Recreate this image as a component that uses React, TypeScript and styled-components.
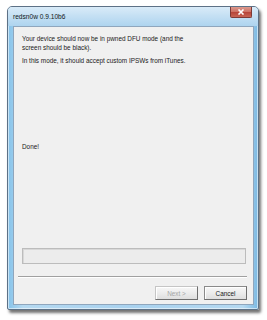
import styled, { createGlobalStyle } from 'styled-components';

const GlobalStyle = createGlobalStyle`
  html, body {
    margin: 0;
    padding: 0;
    background: #ffffff;
  }
  body {
    font-family: "Liberation Sans", Arial, sans-serif;
    -webkit-font-smoothing: antialiased;
  }
`;

const App = () => {
  return (
    <>
      <GlobalStyle />
      <Page>
        <Window>
          <TitleBar>
            <Title>redsn0w 0.9.10b6</Title>
            <CloseButton>
              <svg width="8" height="6" viewBox="0 0 8 6">
                <path d="M1.5 0.5 L6.5 5.5 M6.5 0.5 L1.5 5.5" stroke="#ffffff" strokeWidth="1.6" />
              </svg>
            </CloseButton>
          </TitleBar>
          <Content>
            <Message>
              Your device should now be in pwned DFU mode (and the
              <br />
              screen should be black).
            </Message>
            <Message>In this mode, it should accept custom IPSWs from iTunes.</Message>
            <Status>Done!</Status>
            <Spacer />
            <ProgressBox />
            <Separator />
            <ButtonRow>
              <Button disabled>Next &gt;</Button>
              <Button>Cancel</Button>
            </ButtonRow>
          </Content>
        </Window>
      </Page>
    </>
  );
};

export default App;

const Page = styled.div`
  width: 267px;
  height: 320px;
  padding: 6px 0 0 7px;
  box-sizing: border-box;
`;

const Window = styled.div`
  width: 252px;
  height: 304px;
  box-sizing: border-box;
  display: flex;
  flex-direction: column;
  border: 1px solid #5d7186;
  border-radius: 5px 5px 2px 2px;
  background: linear-gradient(90deg, #86c3ea 0%, #b5d9f1 6%, #a9d2ef 50%, #b5d9f1 94%, #7cb9e2 100%);
  box-shadow: 2px 3px 3px rgba(0, 0, 0, 0.55), inset 0 0 0 1px rgba(255, 255, 255, 0.55);
  padding: 0 4px 4px 5px;
`;

const TitleBar = styled.div`
  height: 19px;
  display: flex;
  align-items: flex-start;
  justify-content: space-between;
  background: linear-gradient(180deg, #d9ebf8 0%, #c3dff3 50%, #aed4ef 100%);
  margin: 0 -4px 0 -5px;
  padding: 0 6px 0 5px;
  border-radius: 4px 4px 0 0;
`;

const Title = styled.div`
  font-size: 6.6px;
  color: #101820;
  margin-top: 6px;
  white-space: nowrap;
`;

const CloseButton = styled.div`
  width: 22px;
  height: 11px;
  display: flex;
  align-items: center;
  justify-content: center;
  background: linear-gradient(180deg, #dc9a8e 0%, #cf7366 45%, #b8463a 55%, #c76454 100%);
  border: 1px solid #7e3a36;
  border-top: none;
  border-radius: 0 0 2px 2px;
  box-sizing: border-box;
`;

const Content = styled.div`
  flex: 1;
  display: flex;
  flex-direction: column;
  background: #f0f0f0;
  border: 1px solid #8fa6bd;
  padding: 7px 6px 4px 8px;
`;

const Message = styled.p`
  margin: 0 0 4px 0;
  font-size: 6.4px;
  line-height: 9px;
  color: #1a1a1a;
  white-space: nowrap;
`;

const Status = styled(Message)`
  margin-top: 73px;
`;

const Spacer = styled.div`
  flex: 1;
`;

const ProgressBox = styled.div`
  height: 16px;
  margin: 0 1px 0 0;
  background: #ececec;
  border: 1px solid #bcbcbc;
  box-shadow: inset 1px 1px 0 #d8d8d8;
  box-sizing: border-box;
`;

const Separator = styled.div`
  height: 0;
  margin: 12px 0 8px -4px;
  border-top: 1px solid #a0a0a0;
  border-bottom: 1px solid #ffffff;
`;

const ButtonRow = styled.div`
  display: flex;
  justify-content: flex-end;
  gap: 6px;
`;

const Button = styled.button`
  width: 43px;
  height: 14px;
  padding: 0;
  font-family: "Liberation Sans", Arial, sans-serif;
  font-size: 6.4px;
  color: ${(p) => (p.disabled ? '#a5a5a5' : '#1a1a1a')};
  background: linear-gradient(180deg, #f7f7f7 0%, #ececec 50%, #dedede 100%);
  border: 1px solid ${(p) => (p.disabled ? '#c5c5c5' : '#8a8a8a')};
  border-right-color: #6e6e6e;
  border-bottom-color: #6e6e6e;
  border-radius: 0;
  box-shadow: inset 1px 1px 0 #ffffff;
`;
